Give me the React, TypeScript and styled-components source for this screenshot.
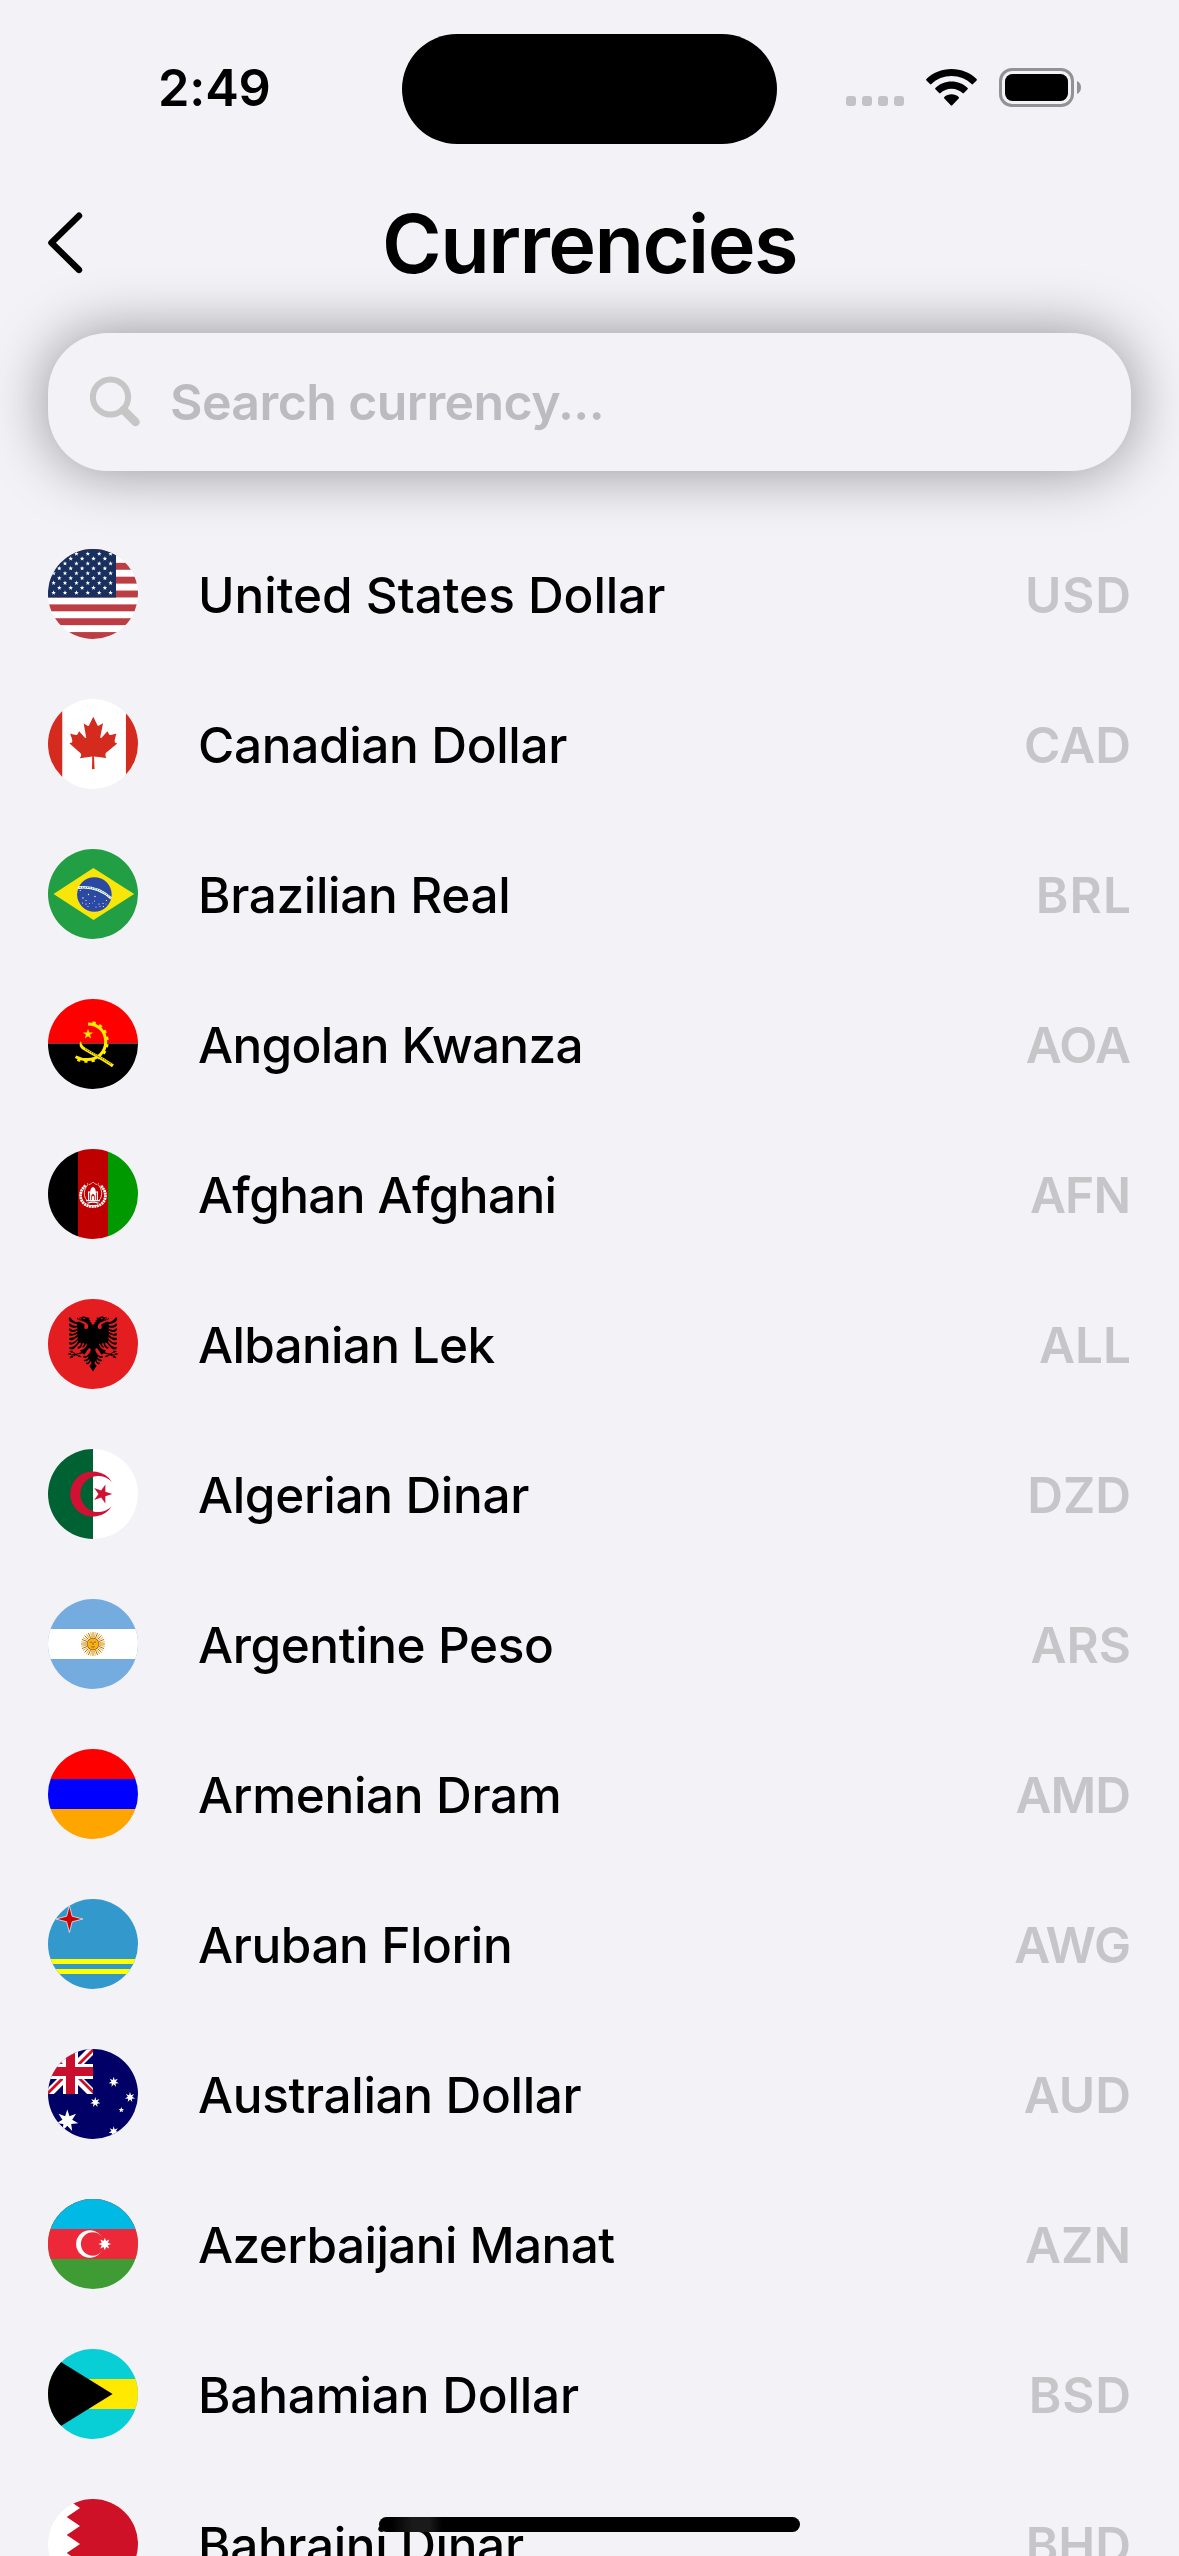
import React from "react";
import styled, { createGlobalStyle } from "styled-components";

const GlobalStyle = createGlobalStyle`
  *, *::before, *::after { box-sizing: border-box; }
  html, body { margin: 0; padding: 0; background: #f2f2f7; }
  body { font-family: Inter, "Liberation Sans", sans-serif; color: #000; overflow: hidden; }
`;

const Screen = styled.main`
  position: relative;
  width: 1179px;
  height: 2556px;
  overflow: hidden;
  background: #f2f2f7;
  display: flex;
  flex-direction: column;
`;

const StatusBar = styled.div`
  flex: none;
  height: 177px;
  padding: 34px 98px 0 0;
  display: grid;
  grid-template-columns: 402px 375px 1fr;
  align-items: start;
`;

const Clock = styled.time`
  padding: 24px 0 0 158px;
  font-size: 50.5px;
  line-height: 60px;
  font-weight: 600;
  letter-spacing: -0.2px;
`;

const Island = styled.div`
  height: 110px;
  border-radius: 55px;
  background: #000;
`;

const StatusIcons = styled.div`
  padding-top: 34px;
  display: flex;
  justify-content: flex-end;
  gap: 22px;
`;

const NavBar = styled.header`
  flex: none;
  height: 132px;
  padding: 0 48px;
  display: grid;
  grid-template-columns: 100px 1fr 100px;
  align-items: center;
`;

const BackButton = styled.button`
  border: 0;
  padding: 0;
  background: none;
  display: flex;
  width: 36px;
  height: 62px;
`;

const Title = styled.h1`
  margin: 0;
  padding-top: 2px;
  text-align: center;
  font-size: 81px;
  line-height: 100px;
  font-weight: 600;
  letter-spacing: -1.6px;
  white-space: nowrap;
`;

const SearchBox = styled.label`
  flex: none;
  margin: 24px 48px 0;
  height: 138px;
  padding: 0 42px;
  border-radius: 60px;
  background: #f2f2f7;
  box-shadow: 0 0 60px rgba(0, 0, 0, 0.4);
  display: flex;
  align-items: center;
  gap: 28px;
`;

const SearchInput = styled.input`
  flex: 1;
  min-width: 0;
  height: 70px;
  border: 0;
  padding: 0;
  outline: none;
  background: transparent;
  font: 600 50px/70px Inter, "Liberation Sans", sans-serif;
  letter-spacing: -0.6px;
  &::placeholder { color: #bcbbc1; opacity: 1; }
`;

const List = styled.ul`
  flex: none;
  margin: 48px 0 0;
  padding: 0 48px;
  list-style: none;
`;

const Row = styled.li`
  height: 150px;
  display: flex;
  align-items: center;
`;

const FlagCircle = styled.span`
  flex: none;
  width: 90px;
  height: 90px;
  border-radius: 50%;
  overflow: hidden;
  display: flex;
  margin-right: 60px;
`;

const Name = styled.span<{ $tracking: number }>`
  flex: 1;
  padding-top: 2px;
  font-size: 49.5px;
  line-height: 60px;
  font-weight: 500;
  letter-spacing: ${(p) => p.$tracking}px;
  white-space: nowrap;
`;

const Code = styled.span<{ $tracking: number }>`
  padding-top: 2px;
  font-size: 49.5px;
  line-height: 60px;
  font-weight: 600;
  letter-spacing: ${(p) => p.$tracking}px;
  margin-right: ${(p) => -p.$tracking}px;
  color: #c6c6c8;
`;

const HomeIndicator = styled.div`
  position: absolute;
  left: 379px;
  bottom: 24px;
  width: 421px;
  height: 15px;
  border-radius: 8px;
  background: linear-gradient(90deg, #000 3%, #1a1a1a 8%, #1a1a1a 12%, #000 15%);
`;

function star(cx: number, cy: number, outer: number, inner: number, n: number, start = -90) {
  const pts: string[] = [];
  for (let i = 0; i < n * 2; i++) {
    const r = i % 2 ? inner : outer;
    const a = ((start + (i * 180) / n) * Math.PI) / 180;
    pts.push(`${(cx + r * Math.cos(a)).toFixed(2)},${(cy + r * Math.sin(a)).toFixed(2)}`);
  }
  return pts.join(" ");
}

const Flag = ({ children, box = 90 }: { children: React.ReactNode; box?: number }) => (
  <svg width="90" height="90" viewBox={`0 0 ${box} ${box}`}>{children}</svg>
);

const usStars: [number, number][] = [];
for (let r = 0; r < 9; r++) {
  const odd = r % 2;
  for (let c = 0; c < (odd ? 5 : 6); c++) usStars.push([5.6 + c * 11.4 + (odd ? 5.7 : 0), 4.8 + r * 4.87]);
}

const UsFlag = () => (
  <Flag>
    <path fill="#fff" d="M0 0h90v90H0z" />
    {[0, 2, 4, 6, 8, 10, 12].map((i) => (
      <rect key={i} y={i * 6.923} width="90" height="6.923" fill="#bd3d44" />
    ))}
    <path fill="#192f5d" d="M0 0h68v48.4H0z" />
    {usStars.map(([x, y], i) => (
      <polygon key={i} fill="#fff" points={star(x, y, 2.4, 1, 5)} />
    ))}
  </Flag>
);

const CanadaFlag = () => (
  <Flag box={512}>
    <path fill="#fff" d="M0 0h512v512H0z" />
    <path
      fill="#d52b1e"
      d="M-100 0H81.1v512H-99.9zm543.4 0h181.1v512H443.4zM135.5 247.4l-14 4.8 65.4 57.5c5 14.8-1.7 19.1-6 26.9l71-9-1.8 71.5 14.8-.5-3.3-70.9 71.2 8.4c-4.5-9.3-8.3-14.3-4.3-29l65.4-54.5-11.4-4.1c-9.4-7.3 4-34.8 6-52.2 0 0-38.1 13.1-40.6 6.2l-9.9-18.5-34.6 38c-3.8 1-5.4-.6-6.3-3.8l16-79.7-25.4 14.3c-2.1.9-4.2 0-5.6-2.4l-24.5-49-25.2 50.9c-1.9 1.8-3.8 2-5.4.8l-24.2-13.6 14.5 79.2c-1.1 3-3.9 4-7.1 2.3l-33.3-37.8c-4.3 7-7.3 18.4-13 21-5.7 2.3-25-4.9-37.9-7.7 4.4 15.9 18.2 42.3 9.5 51z"
    />
  </Flag>
);

const brazilStars: [number, number, number][] = [
  [32.3, 41.5, 0.6], [40.5, 45.5, 0.7], [35, 49, 0.7], [38, 51.5, 0.6], [47, 47.5, 0.7], [46.5, 52, 0.5],
  [34.5, 54, 0.5], [38, 55, 0.6], [41.5, 54.5, 0.5], [48, 58, 0.5], [51, 55, 0.6], [55, 54.5, 0.6],
  [58.5, 51.5, 0.6], [55.5, 57.5, 0.6], [52, 57.5, 0.5], [40, 57.5, 0.5], [58, 55, 0.4], [44.5, 54, 0.4],
];

const BrazilFlag = () => (
  <Flag>
    <path fill="#229e45" d="M0 0h90v90H0z" />
    <path fill="#f8e509" d="m45.5 71 40.7-25.9L45.4 19 5.5 45.1z" />
    <circle cx="46.4" cy="45.5" r="17.3" fill="#2b49a3" />
    <path fill="none" stroke="#fff" strokeWidth="2.6" d="M30 38.6c12-1.4 24 2.2 33.2 10.8" />
    <path fill="none" stroke="#229e45" strokeWidth="1" strokeDasharray="1.4 1.1" d="M31.5 38.5c11-1.2 22.4 2.2 31 10.2" />
    {brazilStars.map(([x, y, r], i) => (
      <circle key={i} cx={x} cy={y} r={r} fill="#fff" />
    ))}
  </Flag>
);

const AngolaFlag = () => (
  <Flag>
    <path fill="red" d="M0 0h90v44.4H0z" />
    <path fill="#000" d="M0 44.4h90V90H0z" />
    <path fill="none" stroke="#ffec00" strokeWidth="3" d="M40 25c11 0 17.7 8 17.7 17.6C57.7 54 49 60.6 39.5 60.6c-4.600 0-8.500-1-12-2.900" />
    <path fill="none" stroke="#ffec00" strokeWidth="3" strokeDasharray="3.200 3.900" d="M44.500 23.600c9 1.700 14.700 9.700 14.700 19C59.200 54.500 49.700 62.300 39.500 62.300c-4.500 0-9-1-12.500-3.300" />
    <path fill="#ffec00" d="M33 42c-2.200 2.600-1.800 6.300 1.600 8.500 9 5.600 18.400 10 26.600 15.800l2.700 1.900 2-2.700-2.800-1.800C54.500 57.500 45.500 54 37 48.400c-2.300-1.500-3.700-3.400-4-6.400z" />
    <path fill="none" stroke="#000" strokeWidth=".6" strokeDasharray="1.400 .8" d="M37 49.800c9 5.500 17 9.200 26.500 15.600" />
    <polygon fill="#ffec00" points={star(40, 35.2, 5.4, 2.1, 5)} />
  </Flag>
);

const AfghanFlag = () => (
  <Flag>
    <path fill="#000" d="M0 0h30v90H0z" />
    <path fill="#be0000" d="M30 0h30v90H30z" />
    <path fill="#090" d="M60 0h30v90H60z" />
    <g fill="none" stroke="#fff">
      <path strokeWidth="2.800" strokeDasharray="2 .6" d="M37.500 36.500c-6 5-6.500 13.500-1.500 18 2.500 2.300 5.500 3 9 3s6.500-.7 9-3c5-4.500 4.500-13-1.500-18" />
      <path strokeWidth=".8" d="M39.500 36c-3.800 4.500-4.500 11-.5 15.500M50.500 36c3.800 4.500 4.500 11 .5 15.500" />
      <path strokeWidth="1" strokeDasharray="1.500 1" d="M39 34.500c2 2 4 .5 6-1.500 2 2 4 3.500 6 1.500" />
      <path strokeWidth="1.200" d="M39.500 54.200c3.500-1.300 7.500-1.300 11 0M40.500 56.500h9" />
    </g>
    <path fill="#fff" d="M42.300 42.500c0-2.500 1.200-4 2.700-4.500 1.500.5 2.700 2 2.700 4.500h2.300V51h2v1.200H38V51h2v-8.500z" />
    <path fill="#be0000" d="M41.200 43.500h.9V51h-.9zm6.700 0h.9V51h-.9zM43.300 51v-4c0-2.500 3.400-2.500 3.400 0v4z" />
    <path fill="#fff" d="M44 51v-3c0-1.500 2-1.500 2 0v3z" />
  </Flag>
);

const EAGLE_HALF =
  "M272 93.300c-4.600 0-12.300 1.500-12.200 5-13-2.100-14.300 3.200-13.500 8q2-2.900 3.900-3.100 2.500-.3 5.400 1.400a22 22 0 0 1 4.800 4.100c-4.600 1.100-8.200.4-11.800-.2a17 17 0 0 1-5.700-2.400c-1.500-1-2-2-4.300-4.300-2.700-2.800-5.600-2-4.700 2.300 2.100 4 5.600 5.800 10 6.600 2.100.3 5.300 1 8.900 1s7.600-.5 9.800 0c-1.300.8-2.800 2.300-5.800 2.800-3 .6-7.500-1.800-10.300-2.400.3 2.300 3.300 4.500 9.100 5.700 9.600 2 17.500 3.600 22.800 6.500a37 37 0 0 1 10.900 9.200c4.700 5.500 5 9.800 5.200 10.800 1 8.800-2.100 13.800-7.900 15.400-2.800.7-8-.7-9.800-2.900-2-2.200-3.700-6-3.200-12 .5-2.200 3.100-8.300.9-9.500a274 274 0 0 0-32.300-15.100c-2.500-1-4.500 2.400-5.300 3.800a50 50 0 0 1-36-23.700c-4.200-7.600-11.300 0-10.100 7.300 1.900 8 8 13.800 15.400 18 7.500 4.100 17 8.200 26.500 8 5.200 1 5.100 7.600-1 8.900-12.100 0-21.800-.2-30.900-9-6.900-6.300-10.700 1.200-8.800 5.400 3.400 13.100 22.100 16.800 41 12.600 7.400-1.200 3 6.600 1 6.700-8 5.700-22.100 11.200-34.600 0-5.700-4.400-9.600-.8-7.400 5.500 5.500 16.500 26.700 13 41.200 5 3.700-2.100 7.100 2.700 2.600 6.400-18.100 12.600-27.100 12.800-35.300 8-10.200-4.100-11 7.200-5 11 6.700 4 23.800 1 36.400-7 5.400-4 5.600 2.300 2.200 4.800-14.900 12.900-20.800 16.300-36.300 14.200-7.700-.6-7.600 8.900-1.600 12.600 8.300 5.100 24.500-3.300 37-13.800 5.300-2.800 6.200 1.800 3.600 7.300a54 54 0 0 1-21.800 18c-7 2.700-13.600 2.300-18.300.7-5.800-2-6.500 4-3.300 9.400 1.900 3.300 9.800 4.300 18.400 1.300s17.800-10.200 24.100-18.500c5.500-4.900 4.900 1.600 2.300 6.200-12.600 20-24.200 27.400-39.500 26.200-6.700-1.200-8.300 4-4 9 7.600 6.200 17 6 25.400-.2 7.300-7 21.400-22.400 28.800-30.600 5.200-4.100 6.900 0 5.300 8.400-1.400 4.800-4.800 10-14.300 13.600-6.500 3.700-1.600 8.800 3.200 9 2.700 0 8.100-3.200 12.300-7.800 5.400-6.200 5.800-10.300 8.800-19.900 2.800-4.600 7.900-2.400 7.900 2.400-2.500 9.600-4.500 11.300-9.500 15.200-4.700 4.500 3.300 6 6 4.100 7.800-5.200 10.600-12 13.200-18.200 2-4.400 7.400-2.300 4.800 5-6 17.400-16 24.200-33.300 27.800-1.700.3-2.800 1.300-2.200 3.300l7 7c-10.700 3.200-19.400 5-30.200 8l-14.800-9.800c-1.300-3.200-2-8.200-9.800-4.700-5.200-2.400-7.700-1.500-10.600 1 4.200 0 6 1.200 7.700 3.100 2.200 5.700 7.200 6.300 12.300 4.700 3.300 2.700 5 4.900 8.400 7.700l-16.700-.5c-6-6.300-10.600-6-14.800-1-3.300.5-4.600.5-6.800 4.400 3.400-1.400 5.600-1.800 7.100-.3 6.300 3.700 10.400 2.900 13.500 0l17.500 1.100c-2.200 2-5.200 3-7.500 4.800-9-2.600-13.800 1-15.400 8.300a17 17 0 0 0-1.200 9.300q1.100-4.600 4.900-7c8 2 11-1.300 11.500-6.100 4-3.200 9.800-3.900 13.700-7.100 4.600 1.400 6.800 2.300 11.400 3.800q2.400 7.500 11.300 5.600c7 .2 5.800 3.200 6.400 5.500 2-3.300 1.900-6.600-2.500-9.600-1.600-4.300-5.200-6.300-9.800-3.800-4.400-1.200-5.500-3-9.900-4.300 11-3.500 18.800-4.300 29.800-7.800l7.700 6.800q2.300 1.400 3.800 0c6.900-10 10-18.700 16.300-25.300 2.500-2.800 5.600-6.400 9-7.300 1.700-.5 3.800-.2 5.200 1.300 1.300 1.400 2.400 4.100 2 8.200-.7 5.700-2.100 7.600-3.700 11s-3.600 5.600-5.700 8.300c-4 5.300-9.400 8.400-12.600 10.500-6.400 4.100-9 2.300-14 2-6.400.7-8 3.800-2.800 8.100 4.800 2.600 9.200 2.900 12.800 2.200 3-.6 6.600-4.500 9.200-6.600 2.800-3.300 7.600.6 4.300 4.500-5.900 7-11.700 11.600-19 11.500-7.700 1-6.200 5.300-1.200 7.400 9.200 3.700 17.400-3.300 21.600-8 3.200-3.500 5.500-3.600 5 1.900-3.300 9.900-7.600 13.700-14.800 14.200-5.800-.6-5.900 4-1.600 7 9.600 6.600 16.600-4.800 19.900-11.600 2.300-6.200 5.900-3.300 6.300 1.800 0 6.900-3 12.400-11.300 19.400 6.300 10.100 13.700 20.400 20 30.500l19.200-214L320 139c-2-1.800-8.800-9.800-10.500-11-.7-.6-1-1-.1-1.400s3-.8 4.500-1c-4-4.100-7.600-5.400-15.300-7.600 1.900-.8 3.700-.4 9.300-.6a30 30 0 0 0-13.500-10.200c4.200-3 5-3.200 9.200-6.700a86 86 0 0 1-19.500-3.800 37 37 0 0 0-12-3.400zm.8 8.400c3.800 0 6.100 1.300 6.100 2.900s-2.300 2.900-6.100 2.900-6.200-1.500-6.200-3c0-1.600 2.400-2.800 6.200-2.800z";

const AlbaniaFlag = () => (
  <Flag box={512}>
    <path fill="#e41e20" d="M0 0h512v512H0z" />
    <g transform="translate(-85.300 0) scale(1.0667)">
      <path d={EAGLE_HALF} />
      <path d={EAGLE_HALF} transform="matrix(-1 0 0 1 640 0)" />
    </g>
  </Flag>
);

const AlgeriaFlag = () => (
  <Flag>
    <path fill="#fff" d="M0 0h90v90H0z" />
    <path fill="#006233" d="M0 0h45v90H0z" />
    <path fill="#d21034" d="M64 33a22.600 22.600 0 1 0 0 24 18.100 18.100 0 1 1 0-24z" />
    <polygon fill="#d21034" points={star(54.3, 45, 10, 3.8, 5, 0)} />
  </Flag>
);

const ArgentinaFlag = () => (
  <Flag>
    <path fill="#74acdf" d="M0 0h90v90H0z" />
    <path fill="#fff" d="M0 30h90v30H0z" />
    {Array.from({ length: 32 }, (_, i) => (
      <path
        key={i}
        transform={`rotate(${i * 11.25} 45 45)`}
        stroke={i % 2 ? "#f6b40e" : "#a85a12"}
        strokeWidth={i % 2 ? 1 : 0.8}
        d="M45 38.500V33"
      />
    ))}
    <circle cx="45" cy="45" r="5.900" fill="#f6b40e" stroke="#85340a" strokeWidth=".7" />
    <path fill="none" stroke="#85340a" strokeWidth=".7" d="M42 43.600c.8-.7 1.700-.7 2.400 0M45.600 43.600c.8-.7 1.700-.7 2.400 0M45 44v2M43.200 47.600c1.200.6 2.400.6 3.600 0" />
  </Flag>
);

const ArmeniaFlag = () => (
  <Flag>
    <path fill="red" d="M0 0h90v30H0z" />
    <path fill="#00f" d="M0 30h90v30H0z" />
    <path fill="orange" d="M0 60h90v30H0z" />
  </Flag>
);

const ArubaFlag = () => (
  <Flag>
    <path fill="#39c" d="M0 0h90v90H0z" />
    <path fill="#ff0" d="M0 60h90v5H0zM0 70h90v5H0z" />
    <polygon fill="#c00" stroke="#fff" strokeWidth=".7" points={star(21.4, 20, 13.4, 3.9, 4)} />
  </Flag>
);

const AustraliaFlag = () => (
  <Flag>
    <path fill="#006" d="M0 0h90v90H0z" />
    <svg width="45" height="45" viewBox="0 0 45 45">
      <path stroke="#fff" strokeWidth="8.400" d="m0 0 45 45M45 0 0 45" />
      <path fill="#c8102e" d="M0 0l17 17h-4L0 4zM45 0v3L30 18h-4L44 0zM0 45v-3l15-15h4L1 45zM45 45 27 27h4l14 14z" />
      <path fill="#fff" d="M15 0h15v15h15v15H30v15H15V30H0V15h15z" />
      <path fill="#c8102e" d="M18 0h9v18h18v9H27v18h-9V27H0v-9h18z" />
    </svg>
    <polygon fill="#fff" points={star(19.3, 71.8, 11.2, 5, 7)} />
    <polygon fill="#fff" points={star(65.7, 33, 5.2, 2.3, 7)} />
    <polygon fill="#fff" points={star(82, 48.3, 5.2, 2.3, 7)} />
    <polygon fill="#fff" points={star(47.3, 53.2, 5.2, 2.3, 7)} />
    <polygon fill="#fff" points={star(65.7, 82.5, 5.2, 2.3, 7)} />
    <polygon fill="#fff" points={star(73.3, 61, 2.9, 1.2, 5)} />
  </Flag>
);

const AzerbaijanFlag = () => (
  <Flag>
    <path fill="#3f9c35" d="M0 0h90v90H0z" />
    <path fill="#ed2939" d="M0 0h90v60H0z" />
    <path fill="#00b9e4" d="M0 0h90v30H0z" />
    <circle cx="41.800" cy="45" r="13.700" fill="#fff" />
    <circle cx="44.600" cy="45" r="11.700" fill="#ed2939" />
    <polygon fill="#fff" points={star(56.8, 45, 6.3, 3.3, 8)} />
  </Flag>
);

const BahamasFlag = () => (
  <Flag>
    <path fill="#08ced6" d="M0 0h90v90H0z" />
    <path fill="#ffe900" d="M0 30h90v30H0z" />
    <path fill="#000" d="M0 4.900 64.600 44.900 0 85z" />
  </Flag>
);

const BahrainFlag = () => (
  <Flag>
    <path fill="#fff" d="M0 0h90v90H0z" />
    <path fill="#ce1126" d="M90 0H18.700L32 9 18.700 18 32 27 18.700 36 32 45 18.700 54 32 63 18.700 72 32 81 18.700 90H90z" />
  </Flag>
);

interface Currency {
  name: string;
  code: string;
  flag: React.ComponentType;
  tracking?: number;
  codeTracking?: number;
}

const currencies: Currency[] = [
  { name: "United States Dollar", code: "USD", flag: UsFlag, tracking: -0.05, codeTracking: 0.8 },
  { name: "Canadian Dollar", code: "CAD", flag: CanadaFlag },
  { name: "Brazilian Real", code: "BRL", flag: BrazilFlag, codeTracking: 1.2 },
  { name: "Angolan Kwanza", code: "AOA", flag: AngolaFlag, tracking: -0.7, codeTracking: -0.4 },
  { name: "Afghan Afghani", code: "AFN", flag: AfghanFlag, tracking: -0.62, codeTracking: -0.8 },
  { name: "Albanian Lek", code: "ALL", flag: AlbaniaFlag, tracking: -0.7 },
  { name: "Algerian Dinar", code: "DZD", flag: AlgeriaFlag },
  { name: "Argentine Peso", code: "ARS", flag: ArgentinaFlag, tracking: -0.42 },
  { name: "Armenian Dram", code: "AMD", flag: ArmeniaFlag, codeTracking: -1 },
  { name: "Aruban Florin", code: "AWG", flag: ArubaFlag, tracking: -0.42, codeTracking: -1.3 },
  { name: "Australian Dollar", code: "AUD", flag: AustraliaFlag },
  { name: "Azerbaijani Manat", code: "AZN", flag: AzerbaijanFlag, tracking: -0.6 },
  { name: "Bahamian Dollar", code: "BSD", flag: BahamasFlag, tracking: -0.2, codeTracking: 0.8 },
  { name: "Bahraini Dinar", code: "BHD", flag: BahrainFlag },
];

const SignalDots = () => (
  <svg width="58" height="39" viewBox="0 0 58 39" fill="#c3c2c7">
    {[0, 16, 32, 48].map((x) => (
      <rect key={x} x={x} y="28" width="10" height="10" rx="3" />
    ))}
  </svg>
);

const Wifi = () => (
  <svg width="51" height="39" viewBox="0 0 51 39">
    <path d="M25.500 1C35.300 1 44.300 4.800 50.600 11c.4.400.4 1 0 1.400l-3.600 3.700c-.4.400-1 .4-1.400 0C40.300 11 33.200 8.100 25.500 8.100S10.700 11 5.400 16.100c-.4.400-1 .4-1.400 0L.4 12.400c-.4-.4-.4-1 0-1.400C6.700 4.800 15.700 1 25.500 1z" />
    <path d="M25.500 13.600c6.200 0 11.900 2.400 16.100 6.300.4.400.4 1 0 1.400l-3.700 3.700c-.4.400-1 .4-1.400 0-2.900-2.600-6.800-4.200-11-4.200s-8.100 1.600-11 4.200c-.4.400-1 .4-1.400 0l-3.700-3.700c-.4-.4-.4-1 0-1.400 4.200-3.900 9.900-6.300 16.100-6.300z" />
    <path d="M25.500 26.300c2.800 0 5.300 1 7.200 2.700.4.400.4 1 0 1.400l-6.500 6.900c-.4.400-1 .4-1.400 0l-6.500-6.900c-.4-.4-.4-1 0-1.400 1.900-1.700 4.400-2.700 7.200-2.700z" />
  </svg>
);

const Battery = () => (
  <svg width="82" height="39" viewBox="0 0 82 39">
    <rect x="1.500" y="1.500" width="72" height="36" rx="11.500" fill="none" stroke="#929195" strokeWidth="3" />
    <rect x="6" y="6" width="63" height="27" rx="7.500" />
    <path fill="#929195" d="M78 13c2.500 1 4 3.500 4 6.500s-1.500 5.500-4 6.500z" />
  </svg>
);

export default function App() {
  return (
    <>
      <GlobalStyle />
      <Screen>
        <StatusBar>
          <Clock>2:49</Clock>
          <Island />
          <StatusIcons>
            <SignalDots />
            <Wifi />
            <Battery />
          </StatusIcons>
        </StatusBar>
        <NavBar>
          <BackButton aria-label="Back">
            <svg width="36" height="62" viewBox="0 0 36 62" fill="none" stroke="#000" strokeWidth="6.400" strokeLinecap="round" strokeLinejoin="round">
              <path d="M31 3.700 3.400 30.700 31 57.900" />
            </svg>
          </BackButton>
          <Title>Currencies</Title>
        </NavBar>
        <SearchBox>
          <svg width="52" height="52" viewBox="0 0 52 52" fill="none" stroke="#c6c6c6">
            <circle cx="20.500" cy="21" r="17.600" strokeWidth="6" />
            <path d="M33.500 34 45.500 46" strokeWidth="8.500" strokeLinecap="round" />
          </svg>
          <SearchInput placeholder="Search currency..." />
        </SearchBox>
        <List>
          {currencies.map(({ name, code, flag: FlagArt, tracking = -0.35, codeTracking = 0 }) => (
            <Row key={code}>
              <FlagCircle>
                <FlagArt />
              </FlagCircle>
              <Name $tracking={tracking}>{name}</Name>
              <Code $tracking={codeTracking}>{code}</Code>
            </Row>
          ))}
        </List>
        <HomeIndicator />
      </Screen>
    </>
  );
}
